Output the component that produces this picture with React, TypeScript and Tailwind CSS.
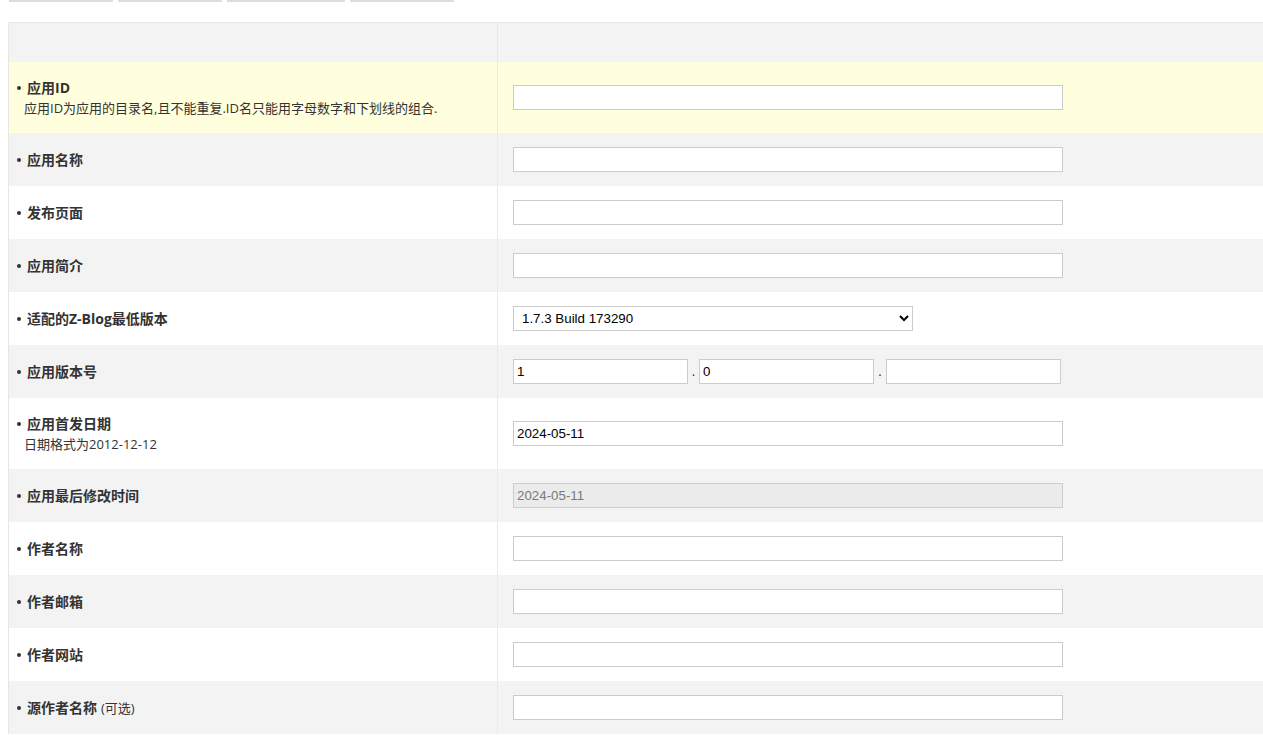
import React from 'react';

type Row = {
    label: string;
    extra?: string;
    hint?: string;
    bg: string;
    kind?: 'text' | 'select' | 'version' | 'disabled';
    value?: string;
};

const rows: Row[] = [
    { label: '应用ID', hint: '应用ID为应用的目录名,且不能重复.ID名只能用字母数字和下划线的组合.', bg: 'bg-[#ffffdd]' },
    { label: '应用名称', bg: 'bg-[#f3f3f3]' },
    { label: '发布页面', bg: 'bg-white' },
    { label: '应用简介', bg: 'bg-[#f3f3f3]' },
    { label: '适配的Z-Blog最低版本', bg: 'bg-white', kind: 'select' },
    { label: '应用版本号', bg: 'bg-[#f3f3f3]', kind: 'version' },
    { label: '应用首发日期', hint: '日期格式为2012-12-12', bg: 'bg-white', value: '2024-05-11' },
    { label: '应用最后修改时间', bg: 'bg-[#f3f3f3]', kind: 'disabled', value: '2024-05-11' },
    { label: '作者名称', bg: 'bg-white' },
    { label: '作者邮箱', bg: 'bg-[#f3f3f3]' },
    { label: '作者网站', bg: 'bg-white' },
    { label: '源作者名称', extra: '(可选)', bg: 'bg-[#f3f3f3]' },
];

const inputCls = "h-[25px] border border-[#cccccc] px-[3px] text-[13.33px] outline-none font-['Liberation_Sans',Arial,sans-serif]";

const Field = ({ row }: { row: Row }) => {
    if (row.kind === 'select') {
        return (
            <select defaultValue="173290" className="h-[25px] w-[400px] border border-[#cccccc] bg-white pl-[4px] text-[13.33px] text-black font-['Liberation_Sans',Arial,sans-serif]">
                <option value="173290">1.7.3 Build 173290</option>
            </select>
        );
    }
    if (row.kind === 'version') {
        return (
            <div className="flex items-center">
                <input className={`${inputCls} w-[175px] bg-white text-black`} defaultValue="1" />
                <span className="w-[11px] text-center text-[13px] text-[#333]">.</span>
                <input className={`${inputCls} w-[175px] bg-white text-black`} defaultValue="0" />
                <span className="w-[12px] text-center text-[13px] text-[#333]">.</span>
                <input className={`${inputCls} w-[175px] bg-white text-black`} defaultValue="" />
            </div>
        );
    }
    if (row.kind === 'disabled') {
        return (
            <input disabled className={`${inputCls} w-[550px] bg-[#ebebeb] text-[#7a7a7a]`} defaultValue={row.value} />
        );
    }
    return <input className={`${inputCls} w-[550px] bg-white text-black`} defaultValue={row.value ?? ''} />;
};

export default function App() {
    return (
        <div className="min-h-screen bg-white text-[#333] font-['Open_Sans','Noto_Sans_CJK_SC',sans-serif]">
            {/* tabs strip */}
            <div className="flex gap-[5px] pl-[9px]">
                <div className="h-[2px] w-[104px] bg-[#dddddd]" />
                <div className="h-[2px] w-[104px] bg-[#dddddd]" />
                <div className="h-[2px] w-[118px] bg-[#dddddd]" />
                <div className="h-[2px] w-[104px] bg-[#dddddd]" />
            </div>

            <div className="ml-[8px] mt-[20px] border-l border-t border-[#e6e6e6]">
                {/* header row */}
                <div className="flex h-[39px] bg-[#f3f3f3]">
                    <div className="w-[489px] border-r border-[#e8e8e8]" />
                    <div className="flex-1" />
                </div>

                {rows.map((row) => (
                    <div key={row.label} className={`flex ${row.hint ? 'h-[71px]' : 'h-[53px]'} ${row.bg}`}>
                        <div className="flex w-[489px] flex-col justify-center border-r border-[#eaeaea] pl-[8px]">
                            <div className="flex items-center text-[14px] leading-[20px]">
                                <span className="mr-[6px] h-[4px] w-[4px] rounded-full bg-[#333]" />
                                <span className="font-bold">{row.label}</span>
                                {row.extra && <span className="ml-[4px] text-[13px]">{row.extra}</span>}
                            </div>
                            {row.hint && (
                                <div className="pl-[7px] text-[13px] leading-[20px]">{row.hint}</div>
                            )}
                        </div>
                        <div className="flex flex-1 items-center pl-[15px]">
                            <Field row={row} />
                        </div>
                    </div>
                ))}
            </div>
        </div>
    );
}
